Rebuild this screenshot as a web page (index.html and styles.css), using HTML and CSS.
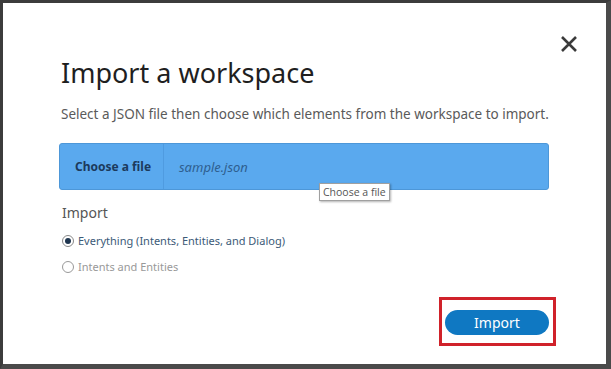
FILE: index.html
```html
<!DOCTYPE html>
<html lang="en">
<head>
    <meta charset="UTF-8">
    <meta name="viewport" content="width=device-width, initial-scale=1.0">
    <title>Import a workspace</title>
    <link rel="stylesheet" href="styles.css">
</head>
<body>
    <div class="frame">
        <div class="header">
            <h2 class="title">Import a workspace</h2>
            <button class="close" aria-label="Close">
                <svg width="18" height="18" viewBox="0 0 18 18">
                    <path d="M2 2 L16 16 M16 2 L2 16" stroke="#3b3b3b" stroke-width="2.6" fill="none"/>
                </svg>
            </button>
        </div>
        <p class="lead">Select a JSON file then choose which elements from the workspace to import.</p>

        <div class="file-box">
            <span class="file-btn">Choose a file</span>
            <span class="file-name">sample.json</span>
            <div class="tooltip">Choose a file</div>
        </div>

        <div class="group-label">Import</div>
        <label class="radio checked">
            <span class="dot"></span>
            Everything (Intents, Entities, and Dialog)
        </label>
        <label class="radio">
            <span class="dot"></span>
            Intents and Entities
        </label>

        <div class="footer">
            <div class="highlight">
                <button class="import-btn">Import</button>
            </div>
        </div>
    </div>
</body>
</html>
```

FILE: styles.css
```css
body {
    margin: 0;
    padding: 0;
    font-family: "Noto Sans", Arial, sans-serif;
    background-color: #fff;
}
.frame {
    height: 369px;
    box-sizing: border-box;
    border-left: 3px solid #3c3c3c;
    border-top: 3px solid #3c3c3c;
    border-right: 5px solid #4a4a4a;
    border-bottom: 5px solid #4a4a4a;
    padding: 0 57px 0 56px;
    display: flex;
    flex-direction: column;
}
.header {
    display: flex;
    justify-content: space-between;
    align-items: flex-start;
}
.title {
    margin: 51px 0 0 2px;
    font-size: 27px;
    font-weight: 400;
    line-height: 38px;
    color: #1f1f1f;
}
.close {
    margin: 32px -29px 0 0;
    padding: 0;
    background: none;
    border: none;
    cursor: pointer;
}
.lead {
    margin: 12px 0 0 2px;
    font-size: 13.5px;
    line-height: 20px;
    white-space: nowrap;
    color: #5a5a5a;
}
.file-box {
    position: relative;
    margin-top: 19px;
    height: 45px;
    display: flex;
    align-items: center;
    background-color: #5aa9ee;
    border: 1px solid #4d97d8;
    border-radius: 3px;
}
.file-btn {
    width: 104px;
    padding-left: 15px;
    box-sizing: border-box;
    height: 100%;
    display: flex;
    align-items: center;
    font-size: 12px;
    font-weight: 700;
    color: #1c3a5c;
    border-right: 1px solid #4f9be0;
}
.file-name {
    padding-left: 15px;
    font-size: 13px;
    font-style: italic;
    color: #2f5f90;
}
.tooltip {
    position: absolute;
    left: 259px;
    top: 39px;
    padding: 1px 3px;
    background: #fff;
    border: 1px solid #a0a0a0;
    box-shadow: 1px 1px 2px rgba(0,0,0,0.3);
    font-family: "Open Sans", sans-serif;
    font-size: 10.5px;
    line-height: 14px;
    color: #555;
}
.group-label {
    margin: 13px 0 0 3px;
    font-size: 14px;
    line-height: 20px;
    color: #555;
}
.radio {
    display: flex;
    align-items: center;
    gap: 4px;
    margin-left: 3px;
    font-size: 11px;
    line-height: 16px;
    color: #999;
}
.radio.checked {
    margin-top: 10px;
    color: #3c5a78;
}
.radio + .radio {
    margin-top: 10px;
}
.dot {
    width: 10px;
    height: 10px;
    border: 1px solid #999;
    border-radius: 50%;
    position: relative;
}
.radio.checked .dot {
    border-color: #888;
}
.radio.checked .dot::after {
    content: "";
    position: absolute;
    left: 2px;
    top: 2px;
    width: 6px;
    height: 6px;
    border-radius: 50%;
    background: #1f3650;
}
.footer {
    margin-top: auto;
    margin-bottom: 18px;
    display: flex;
    justify-content: flex-end;
    margin-right: -7px;
}
.highlight {
    border: 3px solid #d0222a;
    padding: 10px 4px 8px 3px;
}
.import-btn {
    display: block;
    width: 104px;
    height: 25px;
    border: none;
    border-radius: 13px;
    background-color: #0f78c2;
    color: #fff;
    font-family: "Noto Sans", Arial, sans-serif;
    font-size: 14px;
    cursor: pointer;
}
```
